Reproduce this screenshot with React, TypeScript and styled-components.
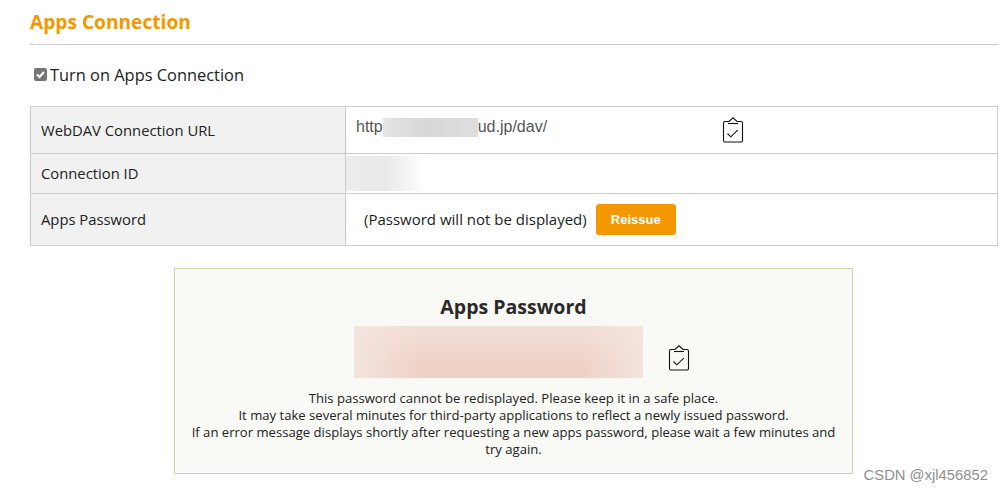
import React from "react";
import styled, { createGlobalStyle } from "styled-components";

const GlobalStyle = createGlobalStyle`
  html, body {
    margin: 0;
    background: #fff;
    font-family: "Open Sans", "Noto Sans", sans-serif;
    color: #222;
  }
`;

const Page = styled.div`
  position: relative;
  width: 1003px;
  height: 492px;
  box-sizing: border-box;
  padding: 0 5px 0 30px;
  overflow: hidden;
`;

const Title = styled.h2`
  margin: 0;
  height: 45px;
  box-sizing: border-box;
  padding-top: 8px;
  font-size: 19.15px;
  line-height: 28px;
  font-weight: 700;
  color: #f39800;
  border-bottom: 1px solid #ccc;
`;

const ToggleRow = styled.label`
  display: flex;
  align-items: center;
  height: 59px;
  padding: 0 0 2px 4px;
  font-size: 16.4px;
  color: #222;
`;

const CheckBox = styled.span`
  display: flex;
  align-items: center;
  justify-content: center;
  width: 13px;
  height: 13px;
  margin-right: 3px;
  border-radius: 2px;
  background: #767676;
`;

const Table = styled.div`
  display: grid;
  grid-template-columns: 315px 1fr;
  grid-template-rows: 47px 40px 51px;
  border: 1px solid #ccc;
  box-sizing: border-box;
  height: 140px;
`;

const HeadCell = styled.div<{ $last?: boolean }>`
  display: flex;
  align-items: center;
  padding: 0 0 1px 10px;
  background: #f1f1f1;
  font-size: 14.8px;
  color: #222;
  border-right: 1px solid #ccc;
  border-bottom: ${(p) => (p.$last ? "none" : "1px solid #ccc")};
`;

const ValueCell = styled.div<{ $last?: boolean }>`
  display: flex;
  align-items: center;
  border-bottom: ${(p) => (p.$last ? "none" : "1px solid #ccc")};
  min-width: 0;
`;

const UrlValue = styled.div`
  display: flex;
  width: 366px;
  height: 100%;
  box-sizing: border-box;
  padding: 11px 0 0 10px;
  font-family: "Liberation Sans", Arial, sans-serif;
  font-size: 16px;
  line-height: 18px;
  color: #555;
`;

const UrlMask = styled.span`
  display: block;
  width: 95px;
  height: 19px;
  background: linear-gradient(90deg, #e4e4e4, #d8d8d8 45%, #dedede);
`;

const IdMask = styled.div`
  width: 80px;
  height: 35px;
  background: linear-gradient(90deg, #ececec, #e9e9e9 50%, #ffffff);
`;

const PasswordNote = styled.span`
  margin-left: 18px;
  margin-right: 9px;
  padding-bottom: 2px;
  font-size: 15px;
  color: #222;
  white-space: nowrap;
`;

const ReissueButton = styled.button`
  width: 80px;
  height: 31px;
  border: none;
  border-radius: 3px;
  padding: 0;
  background: #f39800;
  color: #fff;
  font-family: "Liberation Sans", Arial, sans-serif;
  font-size: 13px;
  font-weight: 700;
`;

const Panel = styled.section`
  width: 679px;
  height: 206px;
  box-sizing: border-box;
  margin: 22px 0 0 144px;
  padding: 24px 16px 0;
  background: #f9f9f5;
  border: 1px solid #d5d1b5;
  display: flex;
  flex-direction: column;
  align-items: center;
`;

const PanelTitle = styled.h3`
  margin: 0;
  font-size: 19.5px;
  line-height: 28px;
  font-weight: 700;
  color: #2a2a2a;
`;

const SecretRow = styled.div`
  display: flex;
  align-items: flex-end;
  align-self: flex-start;
  margin: 5px 0 0 163px;
`;

const SecretMask = styled.div`
  width: 289px;
  height: 52px;
  background:
    linear-gradient(90deg, #f3e4dd, rgba(243, 228, 221, 0) 22%, rgba(243, 228, 221, 0) 80%, #f3e4dd),
    linear-gradient(180deg, #f2dfd7, #efd2c8 75%, #efd3c9);
`;

const Notice = styled.p`
  margin: 12px 0 0;
  text-align: center;
  font-size: 13.1px;
  line-height: 17px;
  color: #222;
`;

const Watermark = styled.span`
  position: absolute;
  right: 15px;
  top: 466px;
  font-family: "Liberation Sans", Arial, sans-serif;
  font-size: 14.8px;
  line-height: 18px;
  color: #8f8f8f;
`;

const ClipIcon = styled.svg<{ $offset: number }>`
  flex: none;
  margin-left: ${(p) => p.$offset}px;
`;

function ClipboardCheck({ offset, className }: { offset: number; className?: string }) {
  return (
    <ClipIcon
      className={className}
      $offset={offset}
      width="22"
      height="26"
      viewBox="0 0 22 26"
      fill="none"
      stroke="#111"
      strokeWidth="1.1"
    >
      <path d="M7 4.5H3a1.5 1.5 0 0 0-1.5 1.5v17.5A1.5 1.5 0 0 0 3 25h16a1.5 1.5 0 0 0 1.5-1.5V6A1.5 1.5 0 0 0 19 4.5h-4L11 .8 7 4.5Z" />
      <path d="M6 6.5h10" />
      <path d="m5.5 16.5 3.3 3.3 7-6.6" />
    </ClipIcon>
  );
}

const UrlRow = styled.div`
  display: flex;
  align-items: center;
  height: 100%;
`;

const SecretClip = styled(ClipboardCheck)`
  margin-bottom: 7px;
`;

export default function App() {
  return (
    <Page>
      <GlobalStyle />
      <Title>Apps Connection</Title>
      <ToggleRow>
        <CheckBox>
          <svg width="11" height="11" viewBox="0 0 11 11" fill="none" stroke="#fff" strokeWidth="2.2">
            <path d="m2 5.5 2.5 2.5L9 3" />
          </svg>
        </CheckBox>
        Turn on Apps Connection
      </ToggleRow>
      <Table>
        <HeadCell>WebDAV Connection URL</HeadCell>
        <ValueCell>
          <UrlRow>
            <UrlValue>
              http
              <UrlMask />
              ud.jp/dav/
            </UrlValue>
            <ClipboardCheck offset={10} />
          </UrlRow>
        </ValueCell>
        <HeadCell>Connection ID</HeadCell>
        <ValueCell>
          <IdMask />
        </ValueCell>
        <HeadCell $last>Apps Password</HeadCell>
        <ValueCell $last>
          <PasswordNote>(Password will not be displayed)</PasswordNote>
          <ReissueButton>Reissue</ReissueButton>
        </ValueCell>
      </Table>
      <Panel>
        <PanelTitle>Apps Password</PanelTitle>
        <SecretRow>
          <SecretMask />
          <SecretClip offset={25} />
        </SecretRow>
        <Notice>
          This password cannot be redisplayed. Please keep it in a safe place.
          <br />
          It may take several minutes for third-party applications to reflect a newly issued password.
          <br />
          If an error message displays shortly after requesting a new apps password, please wait a few minutes and try again.
        </Notice>
      </Panel>
      <Watermark>CSDN @xjl456852</Watermark>
    </Page>
  );
}
